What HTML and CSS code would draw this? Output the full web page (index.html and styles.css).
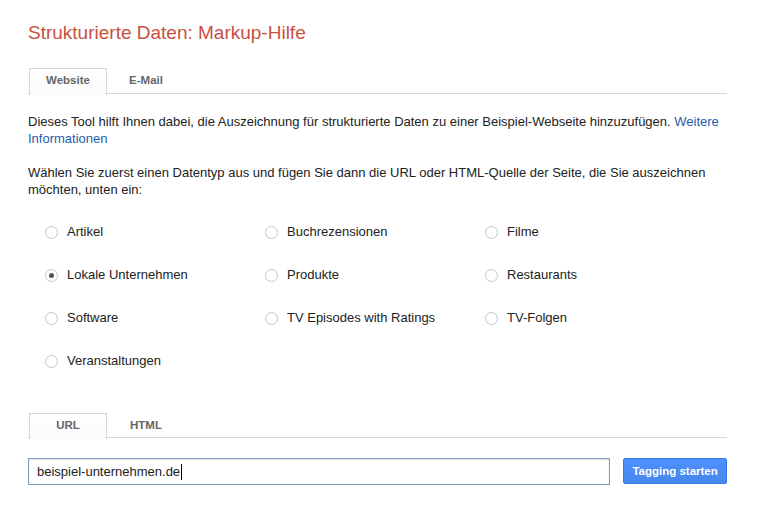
FILE: index.html
```html
<!DOCTYPE html>
<html lang="de">
<head>
<meta charset="utf-8">
<title>Strukturierte Daten: Markup-Hilfe</title>
<link rel="stylesheet" href="styles.css">
</head>
<body>
<div class="page">
  <h1 class="title">Strukturierte Daten: Markup-Hilfe</h1>

  <div class="tabs tabs-top">
    <div class="tab active">Website</div>
    <div class="tab">E-Mail</div>
  </div>

  <p class="para first">Dieses Tool hilft Ihnen dabei, die Auszeichnung für strukturierte Daten zu einer Beispiel-Webseite hinzuzufügen. <a class="link" href="#">Weitere Informationen</a></p>

  <p class="para">Wählen Sie zuerst einen Datentyp aus und fügen Sie dann die URL oder HTML-Quelle der Seite, die Sie auszeichnen möchten, unten ein:</p>

  <div class="types">
    <div class="opt"><span class="radio"></span><span class="lbl">Artikel</span></div>
    <div class="opt"><span class="radio"></span><span class="lbl">Buchrezensionen</span></div>
    <div class="opt"><span class="radio"></span><span class="lbl">Filme</span></div>
    <div class="opt"><span class="radio checked"></span><span class="lbl">Lokale Unternehmen</span></div>
    <div class="opt"><span class="radio"></span><span class="lbl">Produkte</span></div>
    <div class="opt"><span class="radio"></span><span class="lbl">Restaurants</span></div>
    <div class="opt"><span class="radio"></span><span class="lbl">Software</span></div>
    <div class="opt"><span class="radio"></span><span class="lbl">TV Episodes with Ratings</span></div>
    <div class="opt"><span class="radio"></span><span class="lbl">TV-Folgen</span></div>
    <div class="opt"><span class="radio"></span><span class="lbl">Veranstaltungen</span></div>
  </div>

  <div class="tabs tabs-bottom">
    <div class="tab active">URL</div>
    <div class="tab">HTML</div>
  </div>

  <div class="urlrow">
    <div class="input"><span class="value">beispiel-unternehmen.de</span><span class="caret"></span></div>
    <button class="btn" type="button">Tagging starten</button>
  </div>
</div>
</body>
</html>
```
FILE: styles.css
```css
html, body {
  margin: 0;
  padding: 0;
  background: #fff;
}
body {
  font-family: "Liberation Sans", Arial, sans-serif;
  font-size: 13px;
  color: #222;
}
.page {
  width: 699px;
  padding: 21px 0 0 28px;
}
.title {
  margin: 0;
  font-size: 19px;
  font-weight: normal;
  line-height: 24px;
  color: #c9503f;
}
.tabs {
  display: flex;
  border-bottom: 1px solid #d6d6d6;
  padding-left: 1px;
}
.tabs-top {
  margin-top: 23px;
  height: 25px;
}
.tabs-bottom {
  margin-top: 31px;
  height: 24px;
}
.tab {
  width: 76px;
  box-sizing: content-box;
  border: 1px solid transparent;
  border-bottom: none;
  text-align: center;
  font-size: 11.5px;
  font-weight: bold;
  color: #666;
  line-height: 23px;
  margin-bottom: -1px;
}
.tabs-bottom .tab { line-height: 22px; }
.tab.active {
  border-color: #d6d6d6;
  background: linear-gradient(#fff, #fafafa);
  height: calc(100% + 1px);
}
.para {
  margin: 0;
  line-height: 17px;
}
.para.first {
  margin-top: 19px;
  margin-bottom: 17px;
}
.link {
  color: #1f5cb0;
  text-decoration: none;
}
.types {
  display: grid;
  grid-template-columns: 220px 220px 220px;
  grid-auto-rows: 43px;
  margin-top: 12px;
  padding-left: 17px;
}
.opt {
  display: flex;
  align-items: center;
}
.radio {
  width: 13px;
  height: 13px;
  box-sizing: border-box;
  border: 1px solid #c6c6c6;
  border-radius: 50%;
  background: #fff;
  margin-right: 9px;
  position: relative;
  flex: none;
  margin-top: 2px;
}
.radio.checked::after {
  content: "";
  position: absolute;
  left: 3px;
  top: 3px;
  width: 5px;
  height: 5px;
  border-radius: 50%;
  background: #555;
}
.lbl {
  color: #222;
}
.urlrow {
  display: flex;
  align-items: flex-start;
  margin-top: 20px;
}
.input {
  width: 583px;
  height: 27px;
  box-sizing: border-box;
  border: 1px solid #7f9cc6;
  box-shadow: inset 0 1px 2px rgba(0,0,0,0.12);
  padding-left: 8px;
  display: flex;
  align-items: center;
  font-size: 13px;
  color: #222;
}
.caret {
  display: inline-block;
  width: 1px;
  height: 16px;
  background: #000;
  margin-left: 1px;
}
.btn {
  margin-left: 13px;
  width: 104px;
  height: 26px;
  box-sizing: border-box;
  border: 1px solid #3079ed;
  border-radius: 2px;
  background: linear-gradient(#4d90fe, #4787ed);
  color: #fff;
  font-family: "Liberation Sans", Arial, sans-serif;
  font-size: 11.5px;
  font-weight: bold;
  padding: 0;
}
```
